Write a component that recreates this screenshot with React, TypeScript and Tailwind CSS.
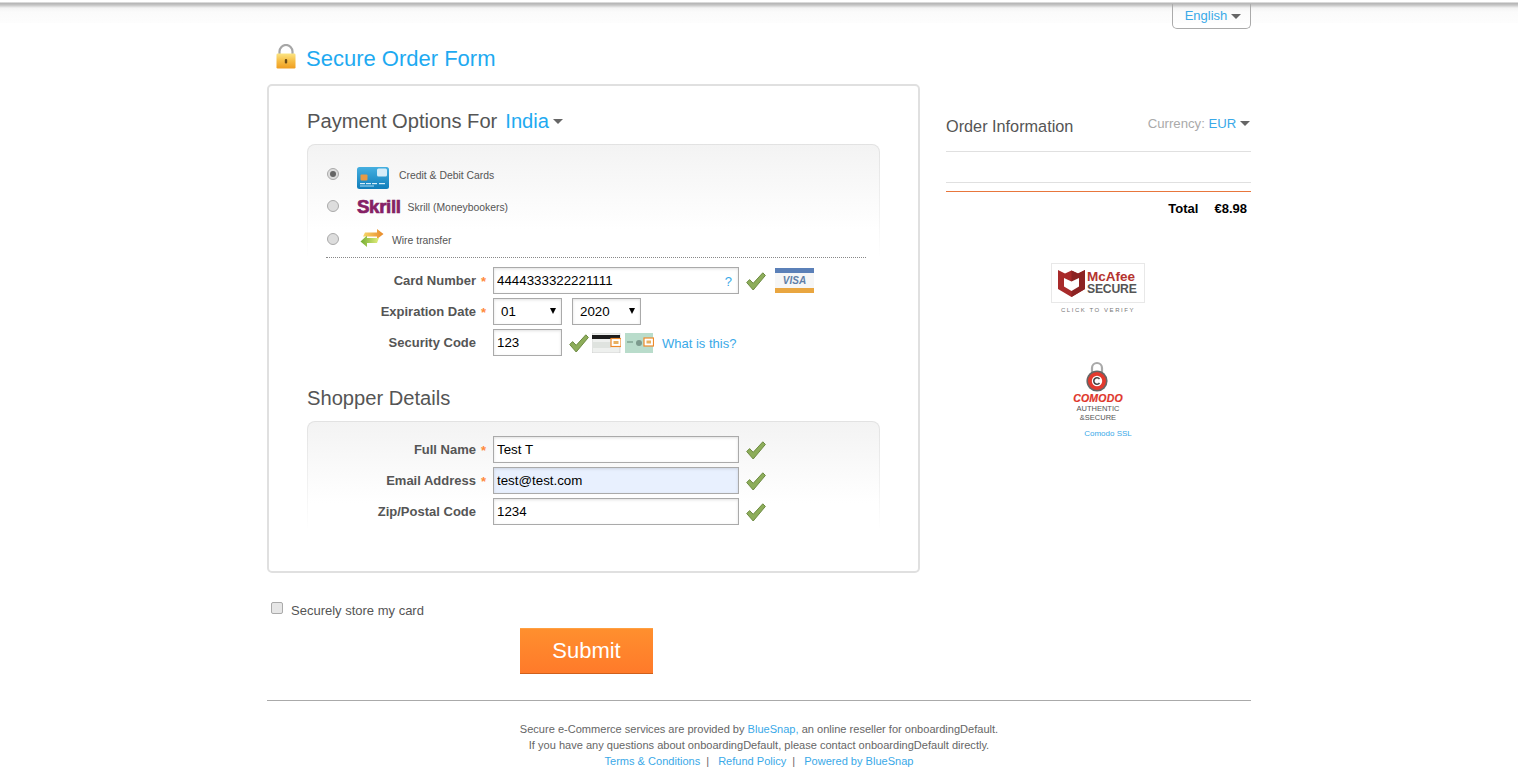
import React from "react";

const Check = () => (
  <svg width="20" height="19" viewBox="0 0 20 19" className="shrink-0 mt-[2px]">
    <polygon points="0.7,10.5 3.6,7.6 7.2,11.3 16.8,0.8 19.4,3.4 7.2,18" fill="#8dad5a" stroke="#6d8a42" strokeWidth="1" />
  </svg>
);

const Caret = ({ className = "" }: { className?: string }) => (
  <span className={"inline-block w-0 h-0 border-l-[5px] border-r-[5px] border-t-[5px] border-l-transparent border-r-transparent border-t-[#666] " + className} />
);

const Radio = ({ on = false }: { on?: boolean }) => (
  <span className="flex items-center justify-center w-3 h-3 rounded-full border border-[#aaa] bg-[#ddd] shrink-0">
    {on && <span className="w-1.5 h-1.5 rounded-full bg-[#666]" />}
  </span>
);

const Lock = () => (
  <svg width="20" height="25" viewBox="0 0 20 25" className="shrink-0">
    <defs>
      <linearGradient id="lk" x1="0" y1="0" x2="0" y2="1">
        <stop offset="0" stopColor="#fbe583" />
        <stop offset="0.5" stopColor="#f6bd45" />
        <stop offset="1" stopColor="#ef9d20" />
      </linearGradient>
    </defs>
    <path d="M3.5 11V7.5a6.5 6.5 0 0 1 13 0V11" fill="none" stroke="#a6a6a6" strokeWidth="2.2" />
    <rect x="0.5" y="9.5" width="19" height="15" rx="1.2" fill="url(#lk)" />
    <rect x="8.8" y="15" width="2.4" height="4.5" rx="1" fill="#6b4a14" />
  </svg>
);

const CardIcon = () => (
  <svg width="32" height="22" viewBox="0 0 32 22" className="shrink-0">
    <defs>
      <linearGradient id="cc" x1="0" y1="0" x2="0" y2="1">
        <stop offset="0" stopColor="#45afe0" />
        <stop offset="1" stopColor="#0f7dba" />
      </linearGradient>
    </defs>
    <rect width="32" height="22" rx="2.5" fill="url(#cc)" />
    <rect x="20" y="1.5" width="10" height="8" rx="1.5" fill="#d6ecf8" />
    <rect x="3.5" y="7.5" width="7" height="6" rx="1" fill="#e79a45" />
    <rect x="3" y="16" width="5" height="1.2" fill="#d5eefa" />
    <rect x="9" y="16" width="5" height="1.2" fill="#d5eefa" />
    <rect x="15" y="16" width="5" height="1.2" fill="#d5eefa" />
    <rect x="22" y="16" width="6" height="1.2" fill="#d5eefa" />
    <rect x="3" y="18.5" width="14" height="1" fill="#a9dbf3" />
  </svg>
);

const WireIcon = () => (
  <svg width="24" height="20" viewBox="0 0 24 20" className="shrink-0">
    <defs>
      <linearGradient id="wo" x1="0" y1="0" x2="1" y2="0">
        <stop offset="0" stopColor="#f7d76a" />
        <stop offset="1" stopColor="#e8892a" />
      </linearGradient>
      <linearGradient id="wg" x1="0" y1="0" x2="1" y2="0">
        <stop offset="0" stopColor="#73ad32" />
        <stop offset="1" stopColor="#e4ee7c" />
      </linearGradient>
    </defs>
    <polygon points="5,4.5 17,4.5 17,1 23.5,6 17,11 17,8.5 3,8.5" fill="url(#wo)" />
    <polygon points="19,10 7,10 7,7.5 0.5,13.5 7,19 7,15 17,15" fill="url(#wg)" />
  </svg>
);

const CvvBack = () => (
  <svg width="29" height="20" viewBox="0 0 29 20" className="shrink-0">
    <rect x="0" y="0" width="28" height="20" fill="#eef0ee" stroke="#bbb" strokeWidth="0.5" />
    <rect x="0" y="2" width="28" height="4" fill="#1c1c1c" />
    <rect x="1" y="9" width="18" height="6" fill="#dfe3df" />
    <rect x="19" y="5.5" width="10" height="8" fill="#fff" stroke="#ee8a2a" strokeWidth="1.2" />
    <rect x="21.5" y="8" width="5" height="3" fill="#e8b060" />
  </svg>
);

const CvvFront = () => (
  <svg width="29" height="20" viewBox="0 0 29 20" className="shrink-0">
    <rect x="0" y="0" width="28" height="20" fill="#b9dccb" />
    <rect x="2" y="8" width="6" height="2" fill="#8fb3a2" />
    <circle cx="14" cy="10" r="3" fill="#7c9a8d" />
    <rect x="19" y="5" width="9.5" height="8" fill="#fff" stroke="#ee8a2a" strokeWidth="1.2" />
    <rect x="21.5" y="7.5" width="4.5" height="3" fill="#e8b060" />
  </svg>
);

const inputCls =
  "h-[27px] border border-[#aaa] px-[3px] text-[13.33px] text-black outline-none shadow-[inset_0_1px_3px_rgba(0,0,0,0.12)]";

const Row = ({
  label,
  required,
  children,
}: {
  label: string;
  required?: boolean;
  children: React.ReactNode;
}) => (
  <div className="flex items-center h-[27px]">
    <label className="w-[169px] text-right text-[13px] font-bold text-[#555]">{label}</label>
    <span className="w-[17px] pl-[5px] pt-[2px] text-[13px] font-bold text-[#ff8a3c] leading-none">
      {required ? "*" : ""}
    </span>
    {children}
  </div>
);

const Sel = ({ value, className }: { value: string; className: string }) => (
  <span className={"relative block " + className}>
    <select
      defaultValue={value}
      className="appearance-none block w-full h-[27px] border border-[#aaa] bg-white pl-[7px] text-[13.33px] text-black outline-none shadow-[inset_0_1px_3px_rgba(0,0,0,0.12)]"
    >
      <option>{value}</option>
    </select>
    <span className="absolute right-[6px] top-[10px] w-0 h-0 border-l-[3.5px] border-r-[3.5px] border-t-[6px] border-l-transparent border-r-transparent border-t-black" />
  </span>
);

const Fading = ({ className, children }: { className: string; children: React.ReactNode }) => (
  <div className={"rounded-t-[8px] p-px pb-0 bg-[linear-gradient(to_bottom,#e2e2e2,#f2f2f2_60%,#ffffff)] " + className}>
    <div className="rounded-t-[7px] h-full bg-[linear-gradient(to_bottom,#f3f3f3,#fbfbfb_50%,#ffffff_75%)]">{children}</div>
  </div>
);

export default function App() {
  return (
    <div className="h-[769px] overflow-hidden bg-white bg-[linear-gradient(to_bottom,#ffffff_2px,#b4b4b4_3px,#c4c4c4_5px,#f4f4f4_8px,#fbfbfb_12px,#fdfdfd_23px,#ffffff_23px)] font-['Liberation_Sans',Arial,sans-serif] text-[#555]">
      <div className="w-[984px] mx-auto">
        {/* language */}
        <div className="flex justify-end pt-[4px] h-[29px]">
          <div className="flex items-center justify-center gap-[4px] w-[79px] h-[25px] border border-t-0 border-[#aaa] rounded-b-[5px] text-[13px] text-[#3aa9e8] pl-[3px]">
            English <Caret />
          </div>
        </div>

        {/* title */}
        <div className="flex items-end h-[55px] pl-[9px] pb-[12px] gap-[10px]">
          <span className="mb-[-1px] self-end relative -top-[4px]"><Lock /></span>
          <h1 className="text-[22px] leading-[26px] font-normal text-[#1eaaf1]">Secure Order Form</h1>
        </div>

        <div className="flex gap-[26px] items-start">
          {/* card */}
          <div className="w-[653px] h-[489px] shrink-0 border-2 border-[#e0e0e0] rounded-[5px] px-[38px] pt-[21px]">
            <div className="flex items-center h-[28px] text-[20.15px] text-[#555]">
              <span>Payment Options For</span>
              <span className="ml-[8px] text-[#1eaaf1]">India</span>
              <Caret className="ml-[4px]" />
            </div>

            <Fading className="mt-[9px] h-[114px]">
              <div className="px-[19px] pt-[13px]">
                <div className="flex items-center h-[32px]">
                  <Radio on />
                  <span className="ml-[18px] mt-[8px]"><CardIcon /></span>
                  <span className="ml-[10px] text-[10.4px] text-[#555] mt-[4px]">Credit &amp; Debit Cards</span>
                </div>
                <div className="flex items-center h-[32px]">
                  <Radio />
                  <span className="ml-[18px] mt-[2px] text-[18.7px] leading-none font-bold tracking-[-0.35px] text-[#862165] [-webkit-text-stroke:0.7px_#862165]">Skrill</span>
                  <span className="ml-[7px] text-[10.4px] text-[#555] mt-[3px]">Skrill (Moneybookers)</span>
                </div>
                <div className="flex items-center h-[32px] mt-[1px]">
                  <Radio />
                  <span className="ml-[21px] -mt-[3px]"><WireIcon /></span>
                  <span className="ml-[8px] text-[10.4px] text-[#555] mt-[4px]">Wire transfer</span>
                </div>
              </div>
            </Fading>
            <div className="mx-[19px] -mt-px w-[540px] border-t border-dotted border-[#888]" />

            <div className="mt-[9px] flex flex-col gap-[4px]">
              <Row label="Card Number" required>
                <span className="relative block w-[246px]">
                  <input defaultValue="4444333322221111" className={inputCls + " w-full bg-white block"} />
                  <span className="absolute right-[7px] top-[5px] text-[13px] text-[#3aa9e8]">?</span>
                </span>
                <span className="ml-[7px]"><Check /></span>
                <span className="ml-[9px] w-[39px] h-[25px] flex flex-col shrink-0">
                  <span className="h-[6px] bg-[#5b80b8]" />
                  <span className="flex-1 flex items-center justify-center bg-[#f6f6f6] text-[10px] font-bold italic text-[#5f7fa8]">VISA</span>
                  <span className="h-[6px] bg-[#e9a640]" />
                </span>
              </Row>
              <Row label="Expiration Date" required>
                <Sel value="01" className="w-[69px]" />
                <Sel value="2020" className="w-[69px] ml-[10px]" />
              </Row>
              <Row label="Security Code">
                <input defaultValue="123" className={inputCls + " w-[69px] bg-white"} />
                <span className="ml-[7px]"><Check /></span>
                <span className="ml-[3px]"><CvvBack /></span>
                <span className="ml-[4px]"><CvvFront /></span>
                <a className="ml-[8px] mt-[2px] text-[13px] text-[#3aa9e8]">What is this?</a>
              </Row>
            </div>

            <h2 className="mt-[28px] h-[28px] leading-[28px] text-[20.15px] font-normal text-[#555]">Shopper Details</h2>

            <Fading className="mt-[9px] h-[109px]">
              <div className="pt-[14px] -ml-px flex flex-col gap-[4px]">
                <Row label="Full Name" required>
                  <input defaultValue="Test T" className={inputCls + " w-[246px] bg-white"} />
                  <span className="ml-[7px]"><Check /></span>
                </Row>
                <Row label="Email Address" required>
                  <input defaultValue="test@test.com" className={inputCls + " w-[246px] bg-[#e8f0fe]"} />
                  <span className="ml-[7px]"><Check /></span>
                </Row>
                <Row label="Zip/Postal Code">
                  <input defaultValue="1234" className={inputCls + " w-[246px] bg-white"} />
                  <span className="ml-[7px]"><Check /></span>
                </Row>
              </div>
            </Fading>
          </div>

          {/* order */}
          <div className="w-[305px] shrink-0">
            <div className="flex justify-between h-[68px] border-b border-[#e0e0e0] pt-[31px]">
              <span className="text-[16.25px] leading-[22px] text-[#555]">Order Information</span>
              <span className="text-[13.2px] leading-[18px] text-[#aaa] pr-[1px]">
                Currency: <span className="text-[#3aa9e8]">EUR</span> <Caret className="mb-[2px]" />
              </span>
            </div>
            <div className="h-[31px] border-b border-[#e0e0e0]" />
            <div className="mt-[8px] h-px bg-[#e8763c]" />
            <div className="flex justify-end gap-[16px] pr-[4px] pt-[9px] text-[13px] leading-[16px] font-bold text-black">
              <span>Total</span>
              <span>€8.98</span>
            </div>

            {/* McAfee */}
            <div className="mt-[46px] flex flex-col items-center pr-[1px]">
              <div className="flex items-center w-[94px] h-[40px] border border-[#e8e8e8] pl-[6px] gap-[2px]">
                <svg width="27" height="28" viewBox="0 0 27 28" className="shrink-0">
                  <path d="M0 1 L7 4.5 L13.5 1.5 L20 4.5 L27 1 V20 L13.5 28 L0 20 Z" fill="#a82a2a" />
                  <path d="M13.5 1.5 L20 4.5 L27 1 V20 L13.5 28 Z" fill="#8c2323" />
                  <path d="M6 9 L13.5 12.5 L21 9 V17.5 L13.5 22 L6 17.5 Z" fill="#fff" />
                </svg>
                <div className="flex flex-col">
                  <span className="text-[13.5px] leading-[13px] font-bold text-[#b5332e]">McAfee</span>
                  <span className="text-[12.2px] leading-[13px] font-bold text-[#555] tracking-[-0.2px]">SECURE</span>
                </div>
              </div>
              <span className="mt-[2px] text-[6px] leading-[10px] tracking-[1.55px] text-[#777]">CLICK TO VERIFY</span>
            </div>

            {/* Comodo */}
            <div className="mt-[46px] flex flex-col items-center pr-[3px]">
              <svg width="22" height="31" viewBox="0 0 22 31">
                <path d="M6 12 V7 a5 5 0 0 1 10 0 V12" fill="none" stroke="#a9a9a9" strokeWidth="2.2" />
                <circle cx="11" cy="20" r="10.6" fill="#666" />
                <circle cx="11" cy="20" r="9" fill="#e23a2e" />
                <circle cx="11" cy="20" r="5.2" fill="#fff" />
                <path d="M13.5 18 a3.2 3.2 0 1 0 0 4" fill="none" stroke="#444" strokeWidth="1.6" />
              </svg>
              <span className="mt-[0px] text-[10.5px] leading-[12px] font-bold italic tracking-[0.2px] text-[#e0362b] [-webkit-text-stroke:0.2px_#e0362b] ml-[2px]">COMODO</span>
              <span className="mt-[1px] text-[7.5px] leading-[8px] text-[#555] ml-[2px]">AUTHENTIC</span>
              <span className="text-[7.5px] leading-[9px] text-[#555] ml-[2px]">&amp;SECURE</span>
              <a className="mt-[7px] ml-[22px] text-[8px] leading-[10px] text-[#3aa9e8]">Comodo SSL</a>
            </div>
          </div>
        </div>

        {/* store */}
        <div className="flex items-start pl-[4px] pt-[29px] h-[55px]">
          <span className="w-[12px] h-[12px] rounded-[2px] border border-[#aaa] bg-[#e6e6e6]" />
          <span className="ml-[8px] text-[13px] leading-[16px] mt-[1px] text-[#555]">Securely store my card</span>
        </div>

        {/* submit */}
        <button className="block ml-[253px] w-[133px] h-[46px] pb-[2px] border-b border-[#d0601c] border-t border-t-[#ffa040] bg-[linear-gradient(to_bottom,#ff8f2e,#ff7a2a)] text-[22px] text-white">
          Submit
        </button>

        <div className="mt-[26px] border-t border-[#aaa]" />

        <div className="pt-[20px] text-center text-[11.05px] leading-[16px] text-[#666]">
          <p>
            Secure e-Commerce services are provided by <a className="text-[#3aa9e8]">BlueSnap,</a> an online reseller for onboardingDefault.
          </p>
          <p>If you have any questions about onboardingDefault, please contact onboardingDefault directly.</p>
          <p>
            <a className="text-[#3aa9e8]">Terms &amp; Conditions</a>
            <span className="mx-[6px]">|</span>
            <a className="ml-[3px] text-[#3aa9e8]">Refund Policy</a>
            <span className="mx-[6px]">|</span>
            <a className="ml-[3px] text-[#3aa9e8]">Powered by BlueSnap</a>
          </p>
        </div>
      </div>
    </div>
  );
}
